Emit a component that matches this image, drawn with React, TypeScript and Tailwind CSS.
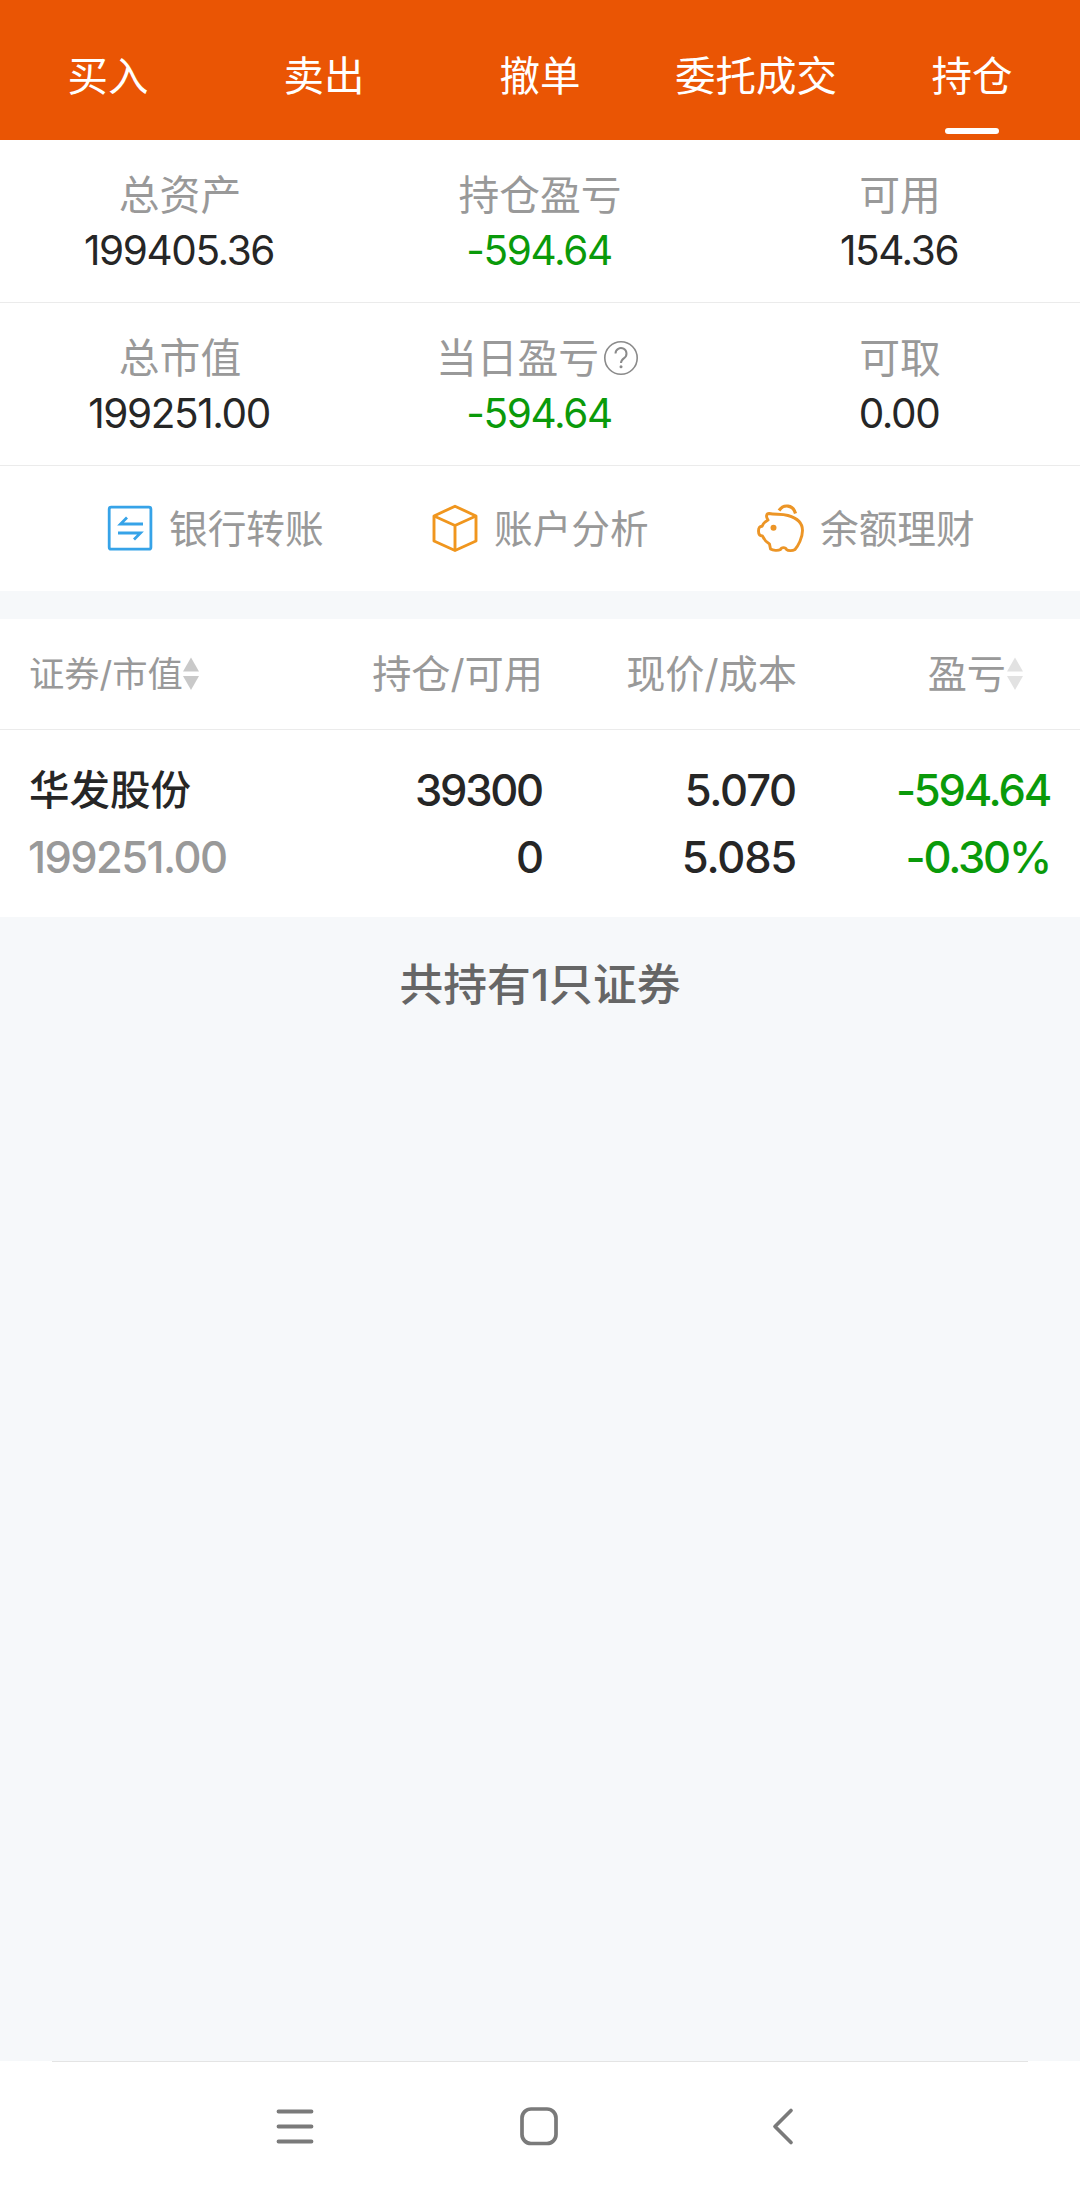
import type { ReactNode } from 'react';

const tabs = [
  { key: 'buy', label: '买入' },
  { key: 'sell', label: '卖出' },
  { key: 'cancel', label: '撤单' },
  { key: 'orders', label: '委托成交' },
  { key: 'position', label: '持仓' },
];

const summary = [
  [
    { label: '总资产', value: '199405.36' },
    { label: '持仓盈亏', value: '-594.64', down: true },
    { label: '可用', value: '154.36' },
  ],
  [
    { label: '总市值', value: '199251.00' },
    { label: '当日盈亏', value: '-594.64', down: true, help: true },
    { label: '可取', value: '0.00' },
  ],
];

const positions = [
  {
    name: '华发股份',
    marketValue: '199251.00',
    amount: '39300',
    available: '0',
    price: '5.070',
    cost: '5.085',
    profit: '-594.64',
    rate: '-0.30%',
  },
];

function HelpIcon() {
  return (
    <svg width="36" height="36" viewBox="0 0 36 36" fill="none" stroke="#8a8a8a" strokeWidth="1.6">
      <circle cx="18" cy="18" r="16.2" />
      <path d="M12.5 13.5a5.5 5.5 0 1 1 8.6 4.6c-2 1.4-3.1 2.3-3.1 4.9" strokeWidth="2" />
      <circle cx="18" cy="26.8" r="1.5" fill="#8a8a8a" stroke="none" />
    </svg>
  );
}

function TransferIcon() {
  return (
    <svg width="48" height="48" viewBox="0 0 48 48" fill="none" stroke="#36a3e8" strokeWidth="2.8">
      <rect x="3.2" y="3.2" width="41.7" height="42" rx="2" />
      <path d="M37 20H14.5l6.5-6.5" />
      <path d="M12 29h22.500l-6.500 6.500" />
    </svg>
  );
}

function CubeIcon() {
  return (
    <svg width="48" height="48" viewBox="0 0 48 48" fill="none" stroke="#f0961e" strokeWidth="2.9" strokeLinejoin="round">
      <path d="M24 2.2 45 12v25L24 46.500 3 37V12Z" />
      <path d="m3 12 21 9.500L45 12M24 21.500v25" />
    </svg>
  );
}

function PigIcon() {
  return (
    <svg width="50" height="50" viewBox="0 0 50 50" fill="none" stroke="#ec9526" strokeWidth="2.9" strokeLinejoin="round">
      <path d="M14 10.5C20 12 26 10.500 33 12.500 42 15 47.500 20 47.500 27.500 47.500 35 43 43 40 46.500 37.500 48 33 48 31.500 46.500 30.500 44 26.500 44 25.500 46.500 23 48 18 47.500 15.500 46L14.500 41C11 39 9 36.500 7.500 33 4.500 33 3.500 31.500 3.500 28 3.500 24 5 23.500 7 23.300 8.500 20 10 18.500 13 17 10.500 13.500 11.500 10.500 14 10.500Z" />
      <path d="M24 7.500C28.500.8 38 1.500 40.500 10.500" strokeWidth="3.200" />
      <circle cx="18.500" cy="24.800" r="3" fill="#ec9526" stroke="none" />
    </svg>
  );
}

function SortIcon({ faded }: { faded?: boolean }) {
  return (
    <svg width="16" height="34" viewBox="0 0 16 34" fill={faded ? '#e2e2e2' : '#c9c9c9'}>
      <path d="M8 0.5 16 14.500H0Z" />
      <path d="M0 19h16L8 33Z" />
    </svg>
  );
}

function Shortcut({ icon, label }: { icon: ReactNode; label: string }) {
  return (
    <div className="flex items-center gap-[15px]">
      {icon}
      <span className="pt-1 text-[38.7px] text-[#999]">{label}</span>
    </div>
  );
}

export default function App() {
  return (
    <div className="flex h-[2191px] w-[1080px] flex-col bg-[#f6f8fa] font-['Inter','Noto_Sans_CJK_SC',sans-serif] leading-none whitespace-nowrap text-[#262626]">
      <nav className="grid h-[140px] grid-cols-5 bg-[#ea5504] text-[40.5px] text-white">
        {tabs.map((tab) => (
          <div key={tab.key} className="flex flex-col items-center justify-between pt-[57px] pb-1.5">
            <span>{tab.label}</span>
            {tab.key === 'position' && <span className="h-1.5 w-[54px] rounded-full bg-white" />}
          </div>
        ))}
      </nav>

      {summary.map((row, i) => (
        <section key={i} className="grid h-[163px] grid-cols-3 border-b border-[#ebebeb] bg-white pt-[34px]">
          {row.map((cell) => (
            <div key={cell.label} className="flex flex-col items-center">
              <div className={`flex h-[42px] items-center gap-1 text-[40.8px] text-[#999] ${cell.help ? 'pr-[5px]' : ''}`}>
                {cell.label}
                {cell.help && <HelpIcon />}
              </div>
              <div
                className={`mt-[15px] pr-[2px] text-[40.5px] tracking-[-1.4px] ${cell.down ? 'text-[#0a9a0a]' : ''}`}
              >
                {cell.value}
              </div>
            </div>
          ))}
        </section>
      ))}

      <section className="flex h-[125px] items-center bg-white pb-0.5 pl-[106px]">
        <div className="w-[325px]">
          <Shortcut icon={<TransferIcon />} label="银行转账" />
        </div>
        <div className="w-[324px]">
          <Shortcut icon={<CubeIcon />} label="账户分析" />
        </div>
        <Shortcut icon={<PigIcon />} label="余额理财" />
      </section>

      <section className="mt-7 bg-white">
        <div className="grid h-[111px] grid-cols-[272px_242px_254px_254px] items-center border-b border-[#ebebeb] px-[29px] text-right text-[39.2px] text-[#999]">
          <div className="flex items-center text-[35.3px]">
            <span className="pt-0.5">证券/市值</span>
            <SortIcon />
          </div>
          <div>持仓/可用</div>
          <div>现价/成本</div>
          <div className="flex items-center justify-end gap-px pr-7">
            盈亏
            <SortIcon faded />
          </div>
        </div>

        {positions.map((p) => (
          <div
            key={p.name}
            className="grid h-[187px] grid-cols-[272px_242px_254px_254px] px-[29px] pt-[27px] text-right text-[43.5px] leading-[67px] font-medium"
          >
            <div className="text-left">
              <div className="text-[40.5px]">{p.name}</div>
              <div className="-ml-px tracking-[-1.6px] text-[#999]">{p.marketValue}</div>
            </div>
            <div className="pr-px tracking-[-2.2px]">
              <div>{p.amount}</div>
              <div>{p.available}</div>
            </div>
            <div className="pr-px tracking-[-1.2px]">
              <div>{p.price}</div>
              <div>{p.cost}</div>
            </div>
            <div className="pr-px tracking-[-2.2px] text-[#0a9a0a]">
              <div>{p.profit}</div>
              <div>{p.rate}</div>
            </div>
          </div>
        ))}
      </section>

      <p className="mt-[47px] text-center text-[43.8px] font-medium text-[#666]">共持有{positions.length}只证券</p>

      <footer className="mt-auto h-[130px] bg-white px-[52px]">
        <div className="flex h-full items-center justify-center gap-[204px] border-t border-[#e4e4e4] pr-0.5 pb-0.5">
          <svg width="40" height="40" viewBox="0 0 40 40" stroke="#7a7a7a" strokeWidth="3.8" strokeLinecap="round">
            <path d="M3.5 5.500h33M3.500 20.500h33M3.500 35.500h33" />
          </svg>
          <svg width="40" height="40" viewBox="0 0 40 40" fill="none" stroke="#7a7a7a" strokeWidth="3.7">
            <rect x="3" y="3" width="34" height="34.5" rx="9" />
          </svg>
          <svg width="40" height="40" viewBox="0 0 40 40" fill="none" stroke="#7a7a7a" strokeWidth="3.7" strokeLinecap="round" strokeLinejoin="round">
            <path d="M28 4.500 12 20.500l16 16" />
          </svg>
        </div>
      </footer>
    </div>
  );
}
